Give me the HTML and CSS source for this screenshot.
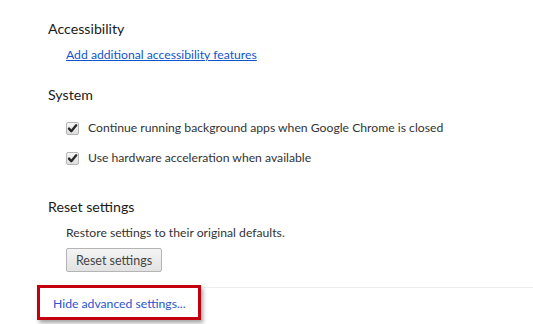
FILE: index.html
```html
<!DOCTYPE html>
<html>
<head>
<meta charset="utf-8">
<link rel="stylesheet" href="styles.css">
</head>
<body>
<div class="page">
  <section class="sec sec-access">
    <h3 class="sec-title">Accessibility</h3>
    <div class="sec-body">
      <a class="link" href="#">Add additional accessibility features</a>
    </div>
  </section>
  <section class="sec sec-system">
    <h3 class="sec-title">System</h3>
    <div class="sec-body">
      <label class="check-row">
        <span class="cb"><svg width="13" height="13" viewBox="0 0 13 13"><path d="M3 6.6 L5.3 9.2 L10.2 3.3" fill="none" stroke="#2a2a2a" stroke-width="2.4" stroke-linecap="round" stroke-linejoin="round"/></svg></span>
        <span class="cb-label">Continue running background apps when Google Chrome is closed</span>
      </label>
      <label class="check-row row2">
        <span class="cb"><svg width="13" height="13" viewBox="0 0 13 13"><path d="M3 6.6 L5.3 9.2 L10.2 3.3" fill="none" stroke="#2a2a2a" stroke-width="2.4" stroke-linecap="round" stroke-linejoin="round"/></svg></span>
        <span class="cb-label">Use hardware acceleration when available</span>
      </label>
    </div>
  </section>
  <section class="sec sec-reset">
    <h3 class="sec-title">Reset settings</h3>
    <div class="sec-body">
      <div class="desc">Restore settings to their original defaults.</div>
      <button class="btn">Reset settings</button>
    </div>
  </section>
  <footer class="footer">
    <a class="hide-link" href="#">Hide advanced settings...</a>
    <span class="highlight"></span>
  </footer>
</div>
</body>
</html>
```
FILE: styles.css
```css
html, body {
  margin: 0;
  padding: 0;
  background: #fff;
}
body {
  width: 533px;
  height: 324px;
  overflow: hidden;
  font-family: "Lato", "Noto Sans", sans-serif;
  color: #303942;
}
.page {
  padding-top: 19px;
}
.sec {
  padding-left: 48px;
}
.sec-title {
  margin: 0;
  font-size: 14.2px;
  line-height: 20px;
  font-weight: normal;
  color: #1a1a1a;
}
.sec-body {
  padding-left: 18px;
  font-size: 12.2px;
  line-height: 16px;
}
.sec-access .sec-body {
  margin-top: 8px;
}
.link {
  color: #15c;
  text-decoration: underline;
}
.sec-system {
  margin-top: 22px;
}
.sec-system .sec-body {
  margin-top: 15px;
}
.check-row {
  display: flex;
  align-items: center;
  height: 16px;
}
.row2 {
  margin-top: 14px;
}
.cb {
  width: 11px;
  height: 11px;
  border: 1px solid #b5b5b5;
  border-radius: 2px;
  background: linear-gradient(#f6f6f6, #dedede);
  position: relative;
  margin-right: 9px;
  flex: none;
}
.cb svg {
  position: absolute;
  left: -1px;
  top: -1px;
}
.cb-label {
  color: #333;
}
.sec-reset {
  margin-top: 31px;
}
.sec-reset .sec-body {
  margin-top: 8px;
}
.desc {
  color: #333;
}
.btn {
  display: block;
  margin-top: 7px;
  width: 96px;
  height: 24px;
  padding: 0;
  border: 1px solid #b4b4b4;
  border-radius: 2px;
  background: linear-gradient(#f4f4f4, #e2e2e2);
  font-family: inherit;
  font-size: 12.5px;
  color: #444;
}
.footer {
  position: relative;
  margin-top: 15px;
  margin-left: 38px;
  border-top: 1px solid #eee;
  padding-top: 8px;
  padding-left: 15px;
  height: 28px;
  font-size: 12.2px;
  line-height: 16px;
}
.hide-link {
  color: #2b55cc;
  text-decoration: none;
}
.highlight {
  position: absolute;
  left: -1px;
  top: -3px;
  width: 158px;
  height: 29px;
  border: 3px solid #c4000f;
  box-shadow: 2px 3px 4px rgba(0, 0, 0, 0.35);
}
```
